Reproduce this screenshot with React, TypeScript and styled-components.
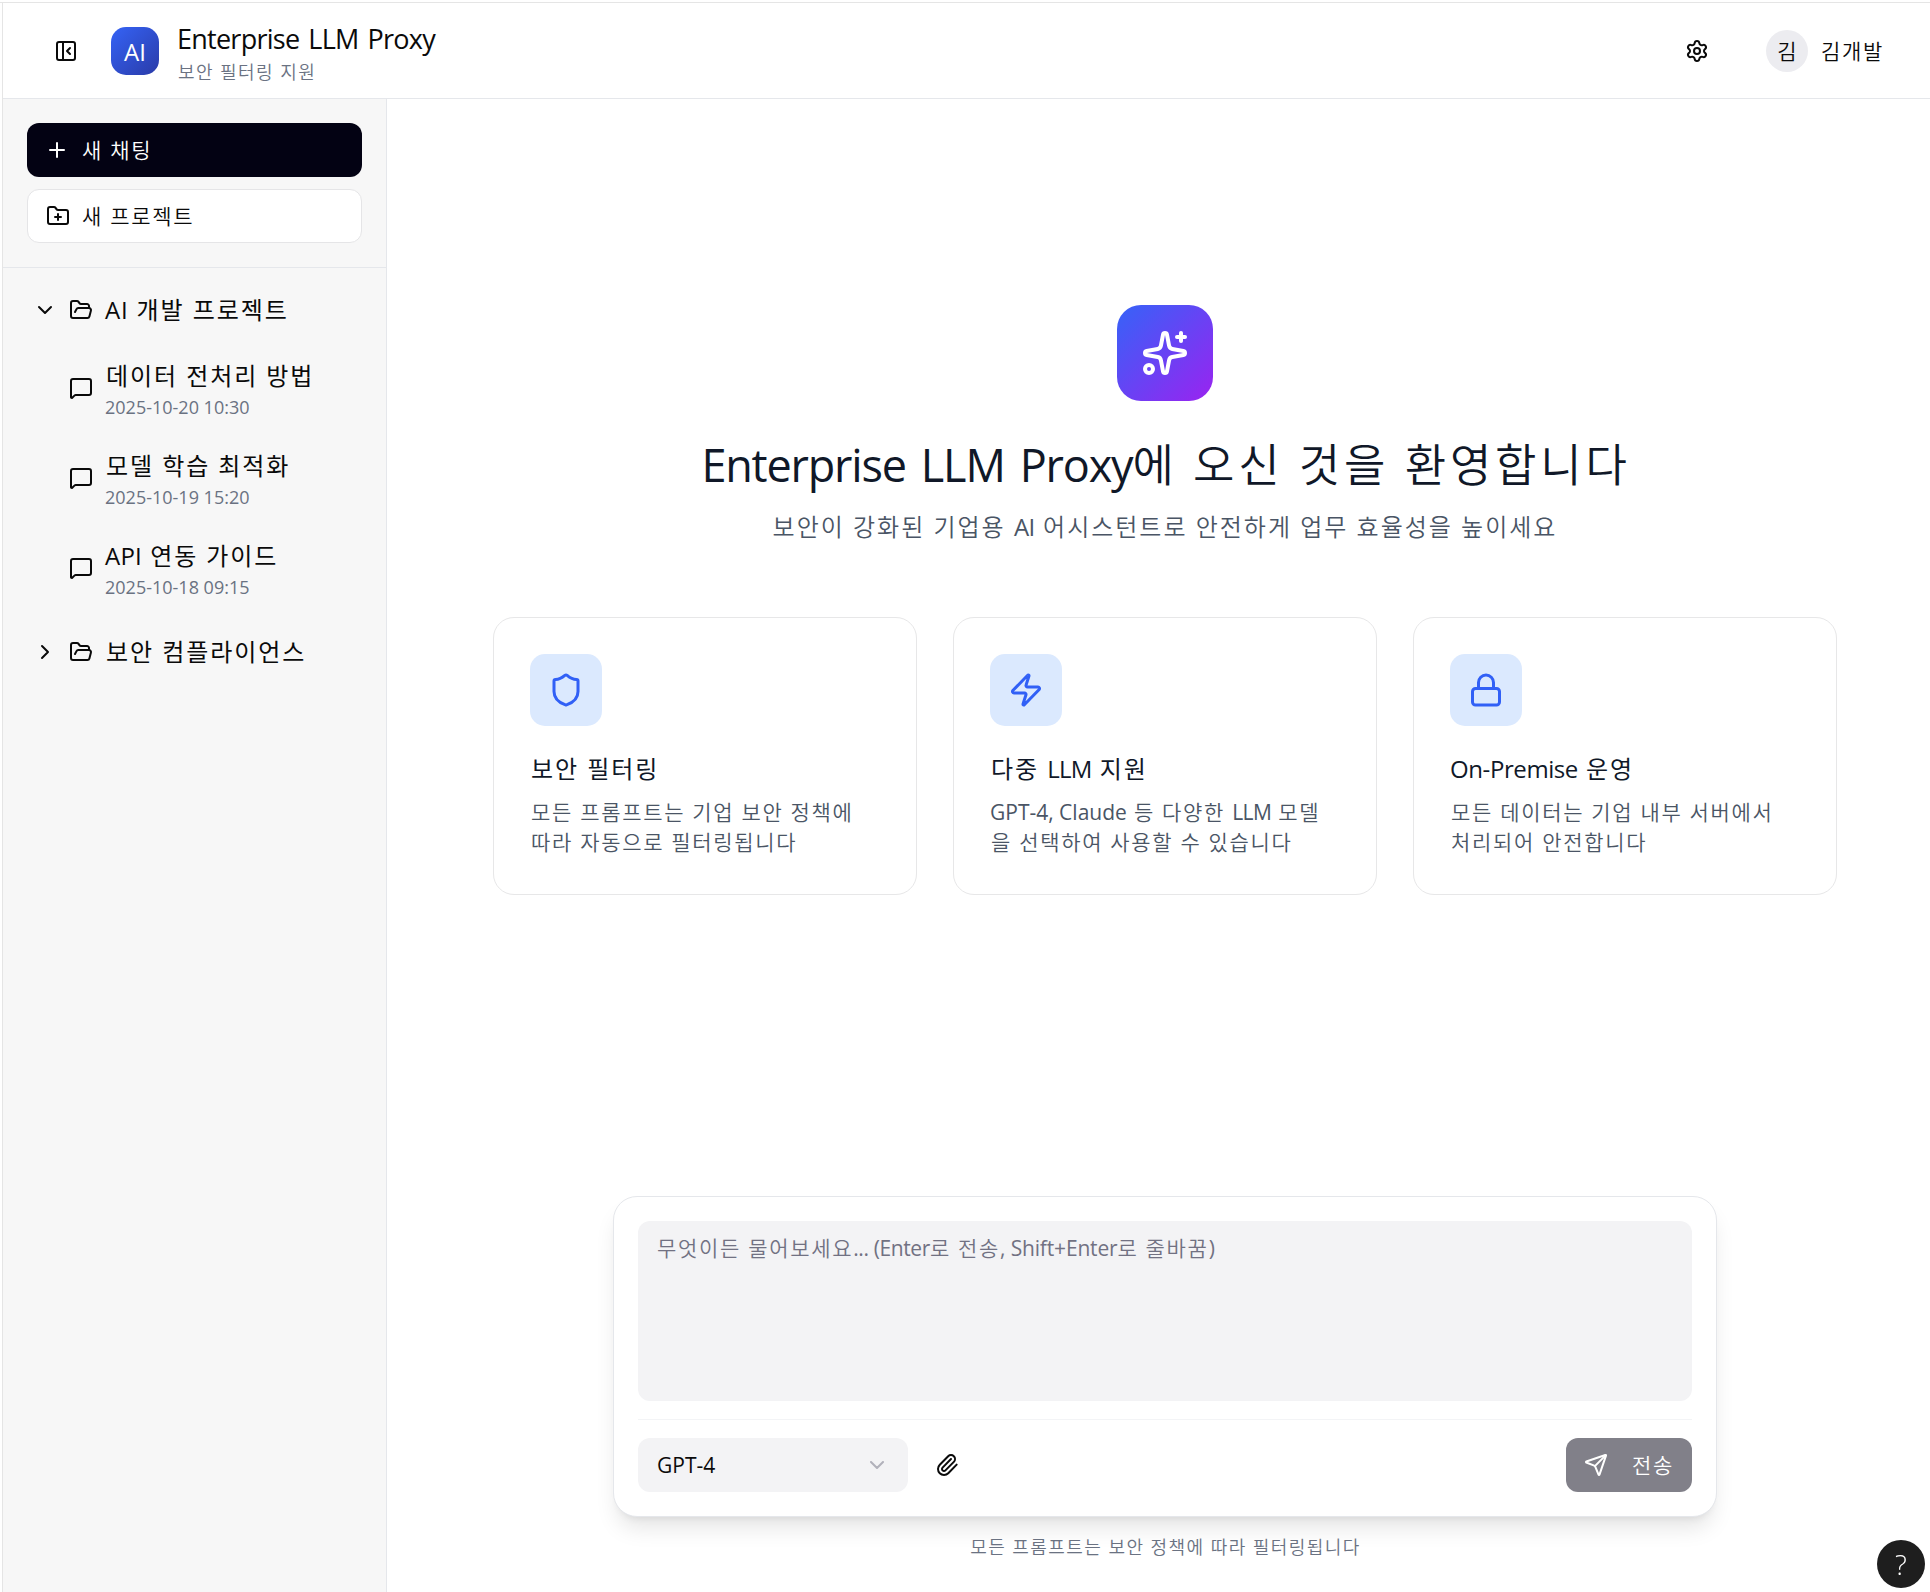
import React from "react";
import styled, { createGlobalStyle, css } from "styled-components";
import {
  ChevronDown, ChevronRight, FolderOpen, FolderPlus, Lock, MessageSquare,
  PanelLeftClose, Paperclip, Plus, Send, Settings, Shield, Sparkles, Zap,
} from "lucide-react";

const Global = createGlobalStyle`
  *, *::before, *::after { box-sizing: border-box; }
  html, body { margin: 0; background: #fff; overflow: hidden; }
  body { font-family: "Open Sans", "Noto Sans CJK KR", sans-serif; font-weight: 350; color: #0a0a0a; }
  button { font: inherit; color: inherit; border: 0; background: none; padding: 0; }
  h1, h2, h3, p { margin: 0; font-weight: inherit; }
  svg { flex-shrink: 0; display: block; }
`;

const Text = styled.span<{ $size: number; $lh: number; $dx?: number; $dy?: number; $ls?: number; $weight?: number }>`
  display: block;
  white-space: nowrap;
  font-size: ${(p) => p.$size}px;
  font-weight: ${(p) => p.$weight ?? 350};
  line-height: ${(p) => p.$lh}px;
  letter-spacing: ${(p) => p.$ls ?? 0.08}em;
  padding-left: ${(p) => p.$dx ?? 0}px;
  margin-top: ${(p) => p.$dy ?? 0}px;
`;
const Latin = styled.span<{ $ls?: number; $ws?: number }>`
  letter-spacing: ${(p) => p.$ls ?? 0}em;
  word-spacing: ${(p) => p.$ws ?? 0}em;
  font-weight: 400;
`;

const Page = styled.div`
  height: 1592px;
  padding-top: 2px;
  overflow: hidden;
`;
const Frame = styled.div`
  border-top: 1px solid #e5e5e5;
  padding-left: 2px;
  height: 1590px;
`;
const Shell = styled.div`
  width: 1941px;
  height: 1589px;
  border-left: 1px solid #e5e5e5;
  display: flex;
  flex-direction: column;
`;
const Header = styled.header`
  height: 96px;
  flex-shrink: 0;
  border-bottom: 1px solid #e5e7eb;
  display: flex;
  align-items: center;
  padding: 0 59px 0 51px;
`;
const Logo = styled.div`
  width: 48px;
  height: 48px;
  margin: 0 18px 0 33px;
  border-radius: 15px;
  background: linear-gradient(135deg, #3563f6, #2a3ba8);
  color: #fff;
  display: flex;
  align-items: center;
  justify-content: center;
`;
const Brand = styled.div`
  display: flex;
  flex-direction: column;
  padding-top: 4px;
`;
const Muted = styled.div`
  color: #6a7282;
`;
const UserArea = styled.div`
  margin-left: auto;
  display: flex;
  align-items: center;
`;
const Avatar = styled.div`
  width: 42px;
  height: 42px;
  margin: 0 13px 0 57px;
  border-radius: 50%;
  background: #ececf0;
  display: flex;
  align-items: center;
  justify-content: center;
`;
const Body = styled.div`
  flex: 1;
  display: flex;
  min-height: 0;
`;
const Sidebar = styled.aside`
  width: 384px;
  flex-shrink: 0;
  background: #f7f7f7;
  border-right: 1px solid #e5e7eb;
`;
const Actions = styled.div`
  display: flex;
  flex-direction: column;
  gap: 12px;
  padding: 24px;
  border-bottom: 1px solid #e5e7eb;
`;
const ActionButton = styled.button<{ $primary?: boolean }>`
  height: 54px;
  border-radius: 12px;
  display: flex;
  align-items: center;
  gap: 12px;
  padding: 0 18px;
  ${(p) =>
    p.$primary
      ? css`background: #030213; color: #fff;`
      : css`background: #fff; border: 1px solid #e5e5e7;`}
`;
const Tree = styled.nav`
  padding: 12px 24px;
  display: flex;
  flex-direction: column;
`;
const FolderRow = styled.div`
  height: 60px;
  display: flex;
  align-items: center;
  padding-left: 6px;
  gap: 12px;
`;
const ChatRow = styled.div`
  height: 90px;
  display: flex;
  align-items: center;
  gap: 12px;
  padding-left: 42px;
`;
const ChatList = styled.div`
  padding: 3px 0 9px;
`;
const Main = styled.main`
  flex: 1;
  display: flex;
  flex-direction: column;
  align-items: center;
  padding-top: 206px;
`;
const HeroIcon = styled.div`
  width: 96px;
  height: 96px;
  border-radius: 24px;
  background: linear-gradient(135deg, #3563f8, #9a23f0);
  color: #fff;
  display: flex;
  align-items: center;
  justify-content: center;
`;
const HeroTitle = styled.h1`
  height: 66px;
  margin-top: 31px;
  color: #101828;
`;
const HeroSub = styled.div`
  height: 36px;
  margin-top: 11px;
  color: #4a5565;
`;
const Cards = styled.section`
  width: 1344px;
  margin-top: 72px;
  display: grid;
  grid-template-columns: repeat(3, 1fr);
  gap: 36px;
`;
const Card = styled.article`
  height: 278px;
  padding: 36px;
  border: 1px solid #e7e7e8;
  border-radius: 21px;
  color: #101828;
`;
const CardIcon = styled.div`
  width: 72px;
  height: 72px;
  border-radius: 15px;
  background: #dbe9fe;
  color: #3160f6;
  display: flex;
  align-items: center;
  justify-content: center;
  margin-bottom: 25px;
`;
const CardBody = styled.div`
  margin-top: 10px;
  color: #4a5565;
`;
const Composer = styled.section`
  width: 1104px;
  height: 321px;
  margin-top: 301px;
  padding: 24px;
  border: 1px solid #e5e7eb;
  border-radius: 24px;
  background: #fff;
  box-shadow: 0 15px 22px -4px rgba(0, 0, 0, 0.1), 0 6px 9px -6px rgba(0, 0, 0, 0.1);
`;
const Prompt = styled.div`
  height: 180px;
  border-radius: 12px;
  background: #f3f3f5;
  color: #717182;
  padding: 12px 19px;
`;
const Toolbar = styled.div`
  margin-top: 18px;
  border-top: 1px solid #f3f4f6;
  padding-top: 18px;
  display: flex;
  align-items: center;
`;
const ModelSelect = styled.button`
  width: 270px;
  height: 54px;
  border-radius: 12px;
  background: #f3f3f5;
  display: flex;
  align-items: center;
  justify-content: space-between;
  padding: 0 19px;
  margin-right: 27px;
  & > svg { color: #717182; opacity: 0.5; }
`;
const SendButton = styled.button`
  width: 126px;
  height: 54px;
  margin-left: auto;
  border-radius: 12px;
  background: #818089;
  color: #fff;
  display: flex;
  align-items: center;
  gap: 24px;
  padding: 0 18px;
`;
const Note = styled(Muted)`
  margin-top: 18px;
`;
const HelpButton = styled.button`
  position: fixed;
  right: 5px;
  bottom: 4px;
  width: 48px;
  height: 48px;
  border-radius: 50%;
  background: #1e1e1e;
  color: #fff;
  display: flex;
  align-items: center;
  justify-content: center;
`;

const chats = [
  { title: "데이터 전처리 방법", at: "2025-10-20 10:30", dx: 1 },
  { title: "모델 학습 최적화", at: "2025-10-19 15:20", dx: 1 },
  { title: <><Latin $ls={0.01}>API</Latin> 연동 가이드</>, at: "2025-10-18 09:15", dx: 0 },
];

const features = [
  {
    icon: Shield,
    title: { text: <>보안 필터링</>, dx: 1 },
    lines: [
      { text: <>모든 프롬프트는 기업 보안 정책에</>, dx: 1 },
      { text: <>따라 자동으로 필터링됩니다</>, dx: 1 },
    ],
  },
  {
    icon: Zap,
    title: { text: <>다중 <Latin $ls={-0.03}>LLM</Latin> 지원</>, dx: 1 },
    lines: [
      { text: <><Latin>GPT-4, Claude</Latin> 등 다양한 <Latin $ls={-0.03}>LLM</Latin> 모델</>, dx: 0 },
      { text: <>을 선택하여 사용할 수 있습니다</>, dx: 1 },
    ],
  },
  {
    icon: Lock,
    title: { text: <><Latin $ls={-0.017}>On-Premise</Latin> 운영</>, dx: 0 },
    lines: [
      { text: <>모든 데이터는 기업 내부 서버에서</>, dx: 1 },
      { text: <>처리되어 안전합니다</>, dx: 1 },
    ],
  },
];

export default function App() {
  return (
    <Page>
      <Global />
      <Frame>
        <Shell>
          <Header>
            <PanelLeftClose size={24} />
            <Logo><Text $size={24} $lh={36} $dy={2}><Latin>AI</Latin></Text></Logo>
            <Brand>
              <Text $size={27} $lh={36}><Latin $ls={-0.0276} $ws={0.1}>Enterprise LLM Proxy</Latin></Text>
              <Muted><Text $size={18} $lh={24} $dx={1} $dy={3}>보안 필터링 지원</Text></Muted>
            </Brand>
            <UserArea>
              <Settings size={24} />
              <Avatar><Text $size={21} $lh={30} $ls={0}>김</Text></Avatar>
              <Text $size={21} $lh={30}>김개발</Text>
            </UserArea>
          </Header>
          <Body>
            <Sidebar>
              <Actions>
                <ActionButton $primary><Plus size={24} /><Text $size={21} $lh={30} $dx={1}>새 채팅</Text></ActionButton>
                <ActionButton><FolderPlus size={24} /><Text $size={21} $lh={30}>새 프로젝트</Text></ActionButton>
              </Actions>
              <Tree>
                <FolderRow>
                  <ChevronDown size={24} /><FolderOpen size={24} />
                  <Text $size={24} $lh={36} $weight={400}><Latin $ls={0.03}>AI</Latin> 개발 프로젝트</Text>
                </FolderRow>
                <ChatList>
                  {chats.map((c) => (
                    <ChatRow key={c.at}>
                      <MessageSquare size={24} />
                      <div>
                        <Text $size={24} $lh={36} $weight={400} $dx={c.dx}>{c.title}</Text>
                        <Muted><Text $size={18} $lh={24} $dy={1}><Latin>{c.at}</Latin></Text></Muted>
                      </div>
                    </ChatRow>
                  ))}
                </ChatList>
                <FolderRow>
                  <ChevronRight size={24} /><FolderOpen size={24} />
                  <Text $size={24} $lh={36} $weight={400} $dx={1}>보안 컴플라이언스</Text>
                </FolderRow>
              </Tree>
            </Sidebar>
            <Main>
              <HeroIcon><Sparkles size={48} /></HeroIcon>
              <HeroTitle>
                <Text $size={45} $lh={66} $ls={0.084} $dx={2}><Latin $ls={-0.0264} $ws={0.1}>Enterprise LLM Proxy</Latin>에 오신 것을 환영합니다</Text>
              </HeroTitle>
              <HeroSub>
                <Text $size={24} $lh={36} $ls={0.083}>보안이 강화된 기업용 <Latin $ls={-0.02}>AI</Latin> 어시스턴트로 안전하게 업무 효율성을 높이세요</Text>
              </HeroSub>
              <Cards>
                {features.map((f, i) => (
                  <Card key={i}>
                    <CardIcon><f.icon size={36} /></CardIcon>
                    <Text $size={24} $lh={36} $weight={400} $dx={f.title.dx}>{f.title.text}</Text>
                    <CardBody>
                      {f.lines.map((l, j) => <Text key={j} $size={21} $lh={30} $dx={l.dx}>{l.text}</Text>)}
                    </CardBody>
                  </Card>
                ))}
              </Cards>
              <Composer>
                <Prompt>
                  <Text $size={21} $lh={30}>무엇이든 물어보세요<Latin $ls={-0.018}>... (Enter</Latin>로 전송<Latin $ls={-0.008}>, Shift+Enter</Latin>로 줄바꿈<Latin>)</Latin></Text>
                </Prompt>
                <Toolbar>
                  <ModelSelect><Text $size={21} $lh={30}><Latin>GPT-4</Latin></Text><ChevronDown size={24} /></ModelSelect>
                  <Paperclip size={24} />
                  <SendButton><Send size={24} /><Text $size={21} $lh={30}>전송</Text></SendButton>
                </Toolbar>
              </Composer>
              <Note><Text $size={18} $lh={24} $dx={1}>모든 프롬프트는 보안 정책에 따라 필터링됩니다</Text></Note>
            </Main>
          </Body>
        </Shell>
      </Frame>
      <HelpButton><Text $size={28} $lh={36} $ls={0} $weight={300}>?</Text></HelpButton>
    </Page>
  );
}
